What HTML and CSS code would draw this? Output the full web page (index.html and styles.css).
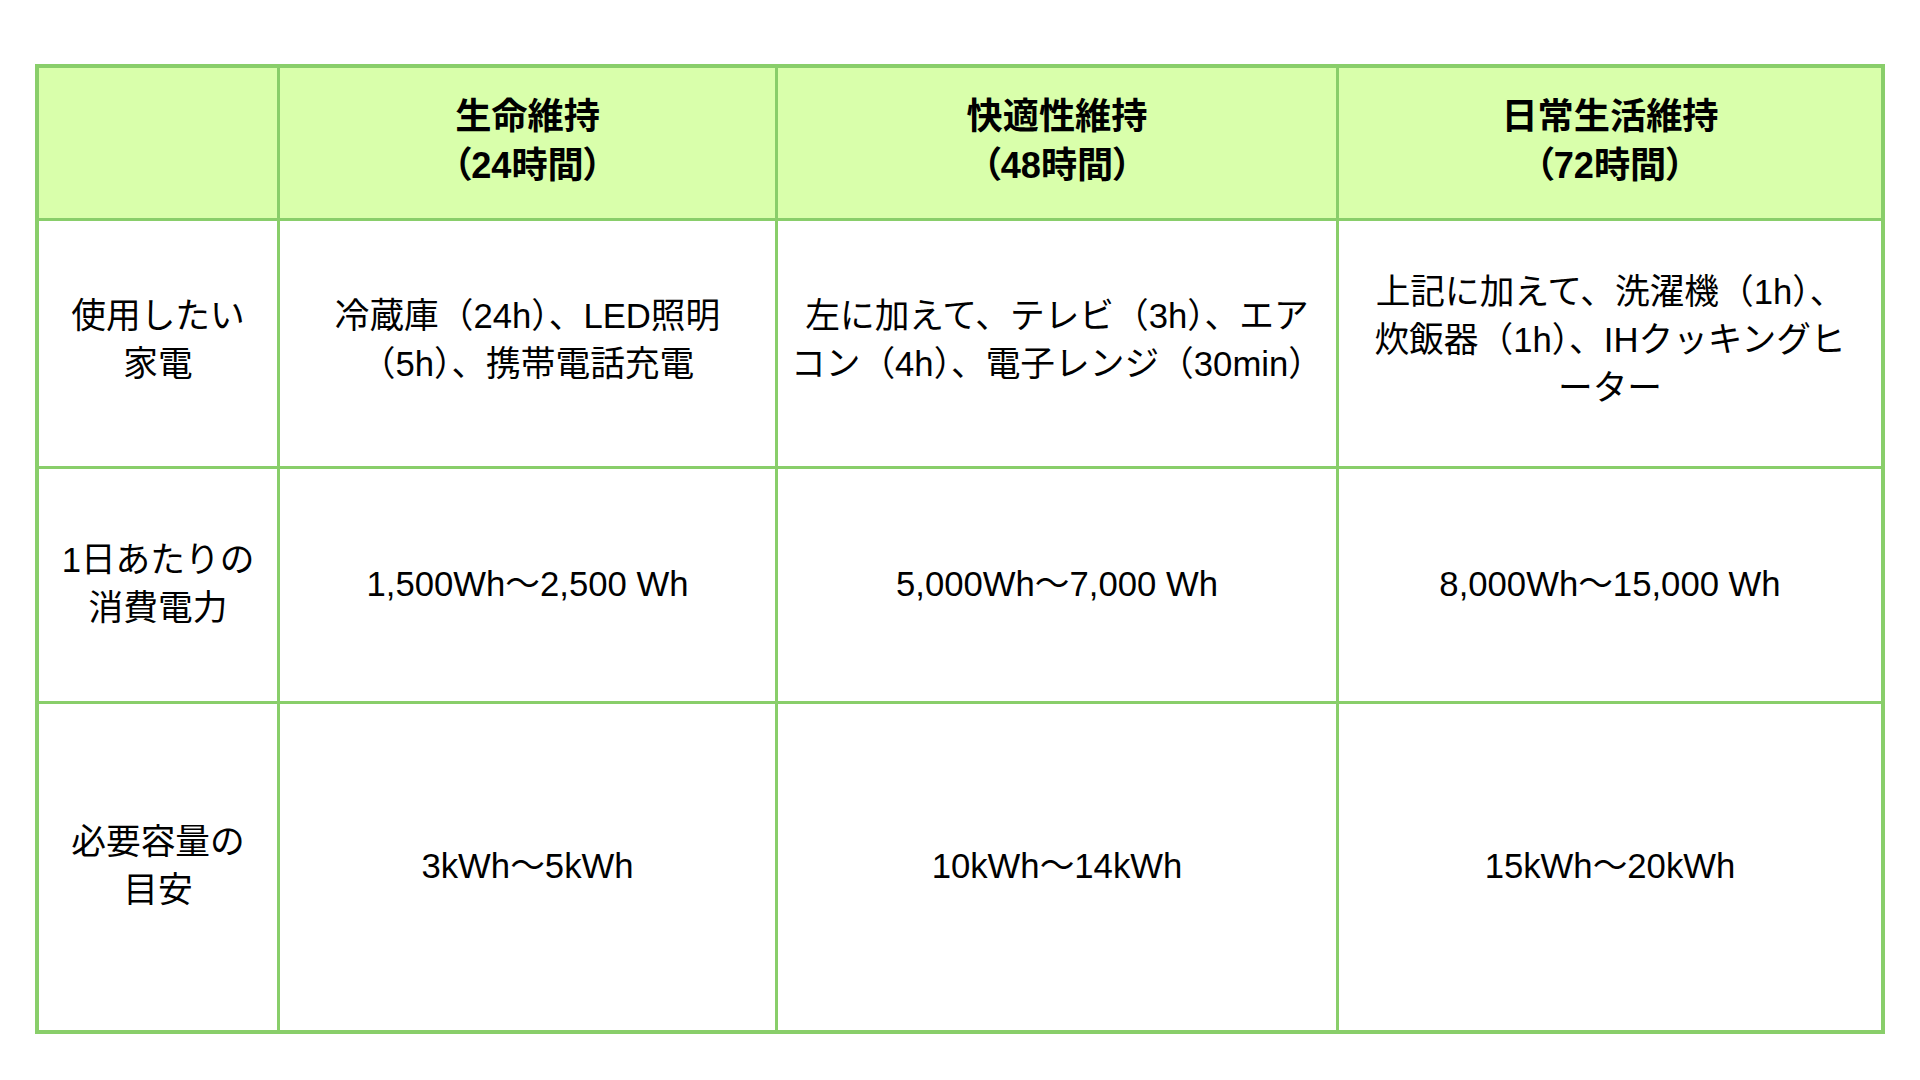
FILE: index.html
```html
<!DOCTYPE html>
<html lang="ja">
<head>
<meta charset="utf-8">
<title>必要容量の目安</title>
<link rel="stylesheet" href="styles.css">
</head>
<body>
<div class="grid">
  <div class="cell head"></div>
  <div class="cell head"><span>生命維持<br><span class="sub">（24時間）</span></span></div>
  <div class="cell head"><span>快適性維持<br><span class="sub">（48時間）</span></span></div>
  <div class="cell head"><span>日常生活維持<br><span class="sub">（72時間）</span></span></div>

  <div class="cell lift"><span>使用したい<br>家電</span></div>
  <div class="cell lift"><span>冷蔵庫（24h）、LED照明<br>（5h）、携帯電話充電</span></div>
  <div class="cell lift"><span>左に加えて、テレビ（3h）、エア<br>コン（4h）、電子レンジ（30min）</span></div>
  <div class="cell lift"><span>上記に加えて、洗濯機（1h）、<br>炊飯器（1h）、IHクッキングヒ<br>ーター</span></div>

  <div class="cell"><span>1日あたりの<br>消費電力</span></div>
  <div class="cell"><span>1,500Wh～2,500 Wh</span></div>
  <div class="cell"><span>5,000Wh～7,000 Wh</span></div>
  <div class="cell"><span>8,000Wh～15,000 Wh</span></div>

  <div class="cell"><span>必要容量の<br>目安</span></div>
  <div class="cell"><span>3kWh～5kWh</span></div>
  <div class="cell"><span>10kWh～14kWh</span></div>
  <div class="cell"><span>15kWh～20kWh</span></div>
</div>
</body>
</html>
```

FILE: styles.css
```css
html, body {
  margin: 0;
  padding: 0;
  background: #ffffff;
}

body {
  font-family: "Liberation Sans", "Noto Sans CJK JP", sans-serif;
  color: #000000;
}

.grid {
  display: grid;
  grid-template-columns: 238px 495px 558px 542px;
  grid-template-rows: 150px 245px 232px 326px;
  gap: 3px;
  padding: 4px;
  background: #89ce6a;
  width: max-content;
  margin: 64px 0 0 35px;
}

.cell {
  background: #ffffff;
  display: flex;
  align-items: center;
  justify-content: center;
  text-align: center;
  white-space: nowrap;
  font-size: 34.7px;
  line-height: 48px;
  box-sizing: border-box;
  padding-bottom: 2px;
}

.cell.lift {
  padding-bottom: 8px;
}

.cell.head {
  background: #d9ffab;
  font-size: 36.2px;
  line-height: 49px;
  font-weight: bold;
  padding-bottom: 4px;
}

.sub {
  font-feature-settings: "palt";
}
```
